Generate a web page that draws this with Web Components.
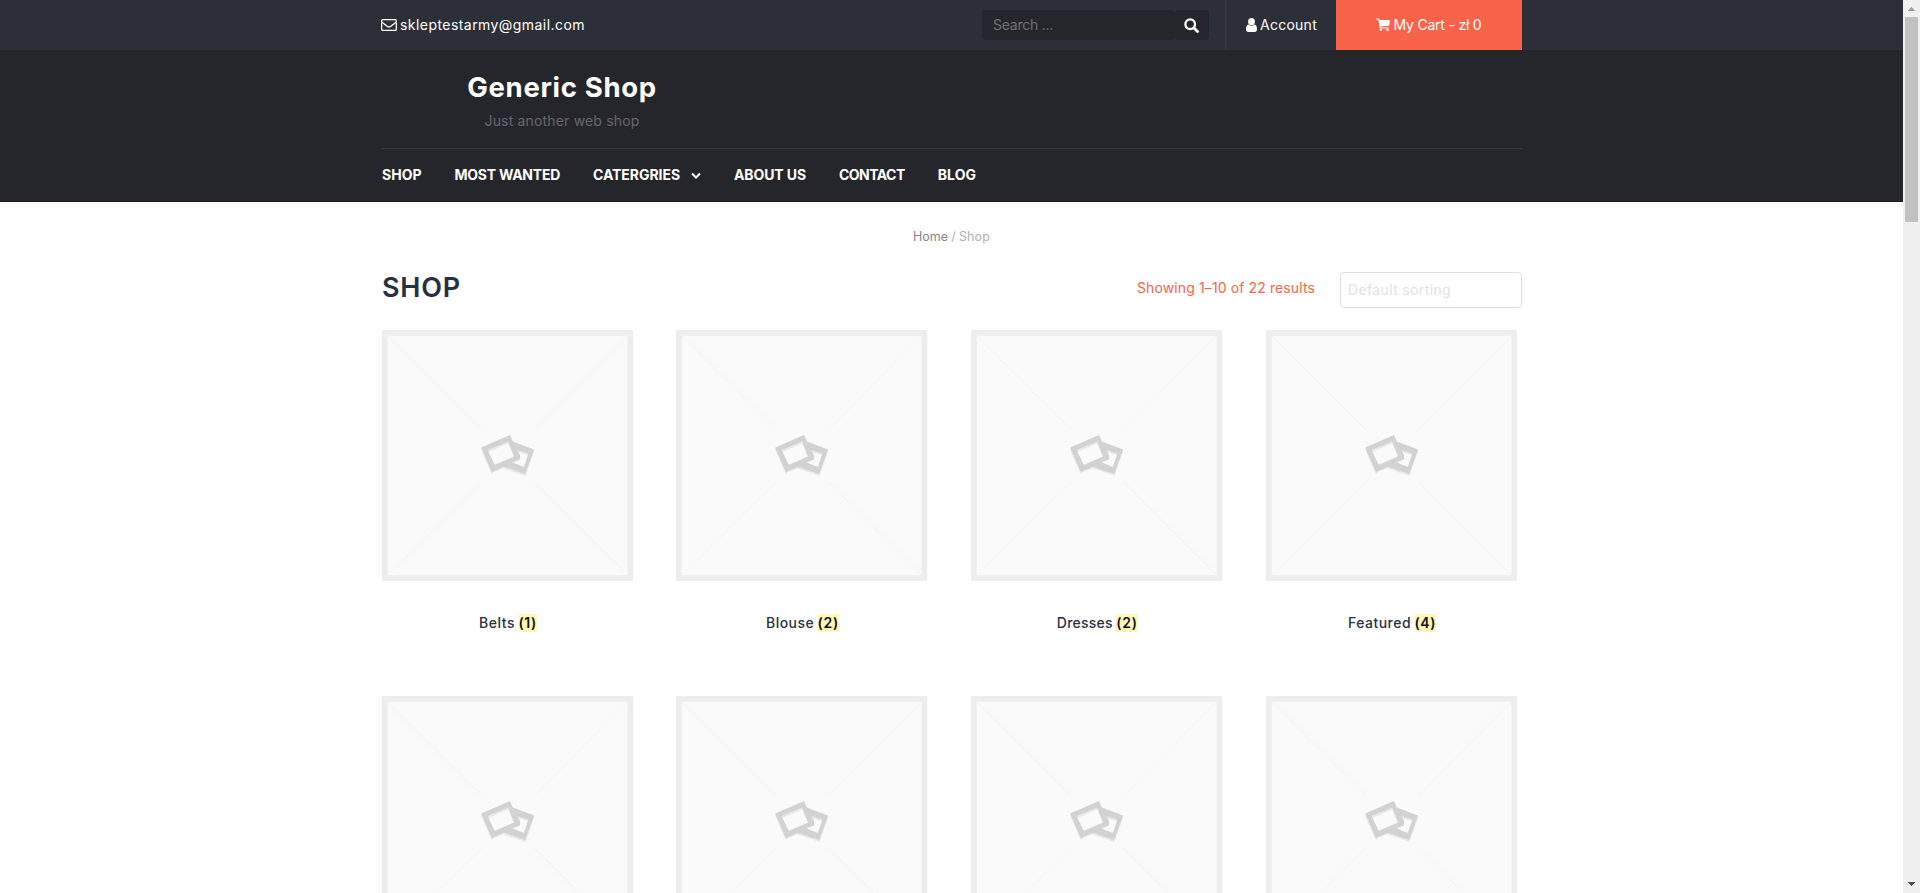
<!DOCTYPE html>
<html lang="en"><head><meta charset="utf-8"><title>Generic Shop</title>
<style>html,body{margin:0;height:100%;overflow:hidden;background:#fff}body{font:14px Inter,"Liberation Sans",sans-serif}</style></head>
<body><shop-page></shop-page>
<script>
const define = (name, html, after) => customElements.define(name, class extends HTMLElement {
  connectedCallback() {
    if (this.shadowRoot) return;
    const t = document.createElement('template');
    t.innerHTML = html;
    this.attachShadow({mode: 'open'}).append(t.content.cloneNode(true));
    if (after) after(this);
  }
});

/* A one-line label whose tracking fills the width given in "w". */
define('fit-text', `<style>:host{display:inline-block;white-space:nowrap}</style><span><slot></slot></span>`, el => {
  const w = +el.getAttribute('w'), s = el.shadowRoot.querySelector('span');
  const natural = s.getBoundingClientRect().width;
  el.style.letterSpacing = (w - natural) / Math.max(1, el.textContent.length) + 'px';
  el.style.width = w + 'px';
});

define('top-bar', `<style>
:host{display:block;height:50px;background:#2c2f37;color:#fff;line-height:50px;font-size:14px}
.in{width:1140px;margin-left:382px;display:flex;height:50px}
svg{display:block;flex:none}
.mail{display:flex;align-items:center;gap:3px;margin-left:-1px;margin-right:auto}
.search{display:flex;height:30px;margin:10px 16px 0 0;line-height:30px;color:#6f7073}
.q{width:182px;padding-left:11px;background:#25262b;border-radius:4px}
.go{width:33px;padding-right:1px;background:#25262b;border-radius:4px;display:flex;align-items:center;justify-content:center}
.acc{width:90px;padding-left:20px;border-left:1px solid #383b43;display:flex;align-items:center;gap:3px}
.acc svg,.cart svg{margin-top:-1px}
.cart{width:146px;padding-left:40px;background:#f9634a;display:flex;align-items:center;gap:3.500px}
</style><div class="in">
<div class="mail"><svg width="16" height="12" viewBox="0 0 16 12" fill="none" stroke="#fff" stroke-width="1.3"><rect x=".65" y=".65" width="14.7" height="10.7" rx="1.2"/><path d="M1 3.2L6.5 7.4Q8 8.5 9.500 7.4L15 3.200"/></svg><fit-text w="185">skleptestarmy@gmail.com</fit-text></div>
<div class="search"><div class="q"><fit-text w="60">Search ...</fit-text></div><div class="go"><svg width="15" height="15" viewBox="0 0 15 15" fill="none" stroke="#fff" stroke-width="2.3"><circle cx="6.200" cy="6.200" r="4.800"/><path d="M9.700 9.700L13.500 13.500" stroke-width="2.800" stroke-linecap="round"/></svg></div></div>
<div class="acc"><svg width="11" height="14" viewBox="0 0 11 13.300" preserveAspectRatio="none" fill="#fff"><circle cx="5.500" cy="3.500" r="3.400"/><path d="M2.600 6.200C.7 6.500 0 8.400 0 10.700C0 12.400.9 13.300 2.300 13.300H8.700C10.100 13.300 11 12.400 11 10.700C11 8.400 10.300 6.500 8.400 6.200C7 7.900 4 7.900 2.600 6.200Z"/></svg><fit-text w="57">Account</fit-text></div>
<div class="cart"><svg width="14" height="13" viewBox="0 0 14 13" fill="#fff"><path d="M0 .5H2.500Q3.200.5 3.400 1.900H13.200Q14 1.900 13.900 2.700L13.300 7Q13.200 7.600 12.500 7.700L4.700 8.600L4.900 9.400H12.500V10.500H4.200Q3.500 10.500 3.600 9.800L3.800 8.900L2.200 1.600H0Z"/><circle cx="4.900" cy="11.700" r="1.200"/><circle cx="11.600" cy="11.700" r="1.200"/></svg><fit-text w="88">My Cart - zł 0</fit-text></div>
</div>`);

define('site-header', `<style>
:host{display:block;height:152px;box-sizing:border-box;background:#25262b;border-bottom:1px solid #1d1a22;color:#fff}
.in{width:1140px;margin-left:382px}
.brand{height:98px;width:360px;text-align:center;display:flex;flex-direction:column;align-items:center}
.t{font-size:27.500px;font-weight:700;line-height:36px;margin-top:19px}
.s{font-size:14px;line-height:20px;color:#66676a;margin-top:6px}
nav{border-top:1px solid #373940;display:flex;font-weight:700;font-size:14px;line-height:52px}
nav fit-text{margin-right:33px}
svg{margin:22.500px 33px 0 -22px}
</style><div class="in"><div class="brand"><fit-text class="t" w="189.500">Generic Shop</fit-text><fit-text class="s" w="155">Just another web shop</fit-text></div>
<nav><fit-text w="39.500">SHOP</fit-text><fit-text w="105.500">MOST WANTED</fit-text><fit-text w="87">CATERGRIES</fit-text><svg width="10" height="8" viewBox="0 0 10 8" fill="none" stroke="#fff" stroke-width="2"><path d="M1 1.500L5 5.500L9 1.500"/></svg><fit-text w="72">ABOUT US</fit-text><fit-text w="65.700">CONTACT</fit-text><fit-text w="38.500">BLOG</fit-text></nav></div>`);

define('shop-toolbar', `<style>
:host{display:block;color:#b0b0b0}
.bc{width:77px;margin:27px 0 0 913px;line-height:16px;font-size:12.500px;display:flex;justify-content:space-between}
.bc b{font-weight:400;color:#858585}
.row{width:1140px;margin:27px 0 0 382px;display:flex;height:58px}
.h{margin:0 auto 0 0;color:#27303e;font-size:27px;font-weight:600;line-height:32px}
.r{color:#f9634a;font-size:14px;line-height:32px}
.sel{width:173px;height:34px;padding-left:7px;margin-left:25px;border:1px solid #dedede;border-radius:4px;color:#e2e2e2;font-size:14px;line-height:34px}
</style><div class="bc"><b><fit-text w="35">Home</fit-text></b><span>/</span><fit-text w="31">Shop</fit-text></div>
<div class="row"><fit-text class="h" w="79">SHOP</fit-text><fit-text class="r" w="178">Showing 1–10 of 22 results</fit-text><div class="sel"><fit-text w="103">Default sorting</fit-text></div></div>`);

define('product-card', `<style>
:host{display:block;height:366px}
svg{display:block}
.l{display:flex;justify-content:center;gap:3.500px;margin:33px 0 0 1px;line-height:17px;font-weight:500;font-size:14px;color:#27303e}
mark{background:#fff8b8;color:#111;padding-bottom:1px;font-weight:600}
</style><svg width="251.300" height="251" viewBox="0 0 251 251" preserveAspectRatio="none">
<path fill="#ededed" d="M0 0H251V251H0Z"/><path fill="#fafafa" d="M5.700 5.700H245.300V245.300H5.700Z"/>
<path d="M6 6L100 100M152 152L245 245" stroke="#eeeeee" stroke-width=".6"/><path d="M245 6L152 100M100 152L6 245" stroke="#f1f1f1" stroke-width=".6"/>
<g fill-rule="evenodd" stroke-linejoin="round" stroke-width="1.500"><path fill="#e9e9e9" stroke="#e9e9e9" d="M131 114L151 121.500L143 145L121 137.500L111 141.500L110 143L100 120L127 108L132 116Z"/>
<path fill="#d2d2d2" stroke="#d2d2d2" d="M131 112.500L151 120L142.500 143L120.500 135.500L138 127Z"/><path fill="#d2d2d2" stroke="#d2d2d2" d="M100 118L127.500 106L137.500 129L110 141Z"/>
<path fill="#e9e9e9" d="M135 120L146.300 123.500L141.800 137L129.500 132L138 129.500L138 125Z"/><path fill="#fafafa" d="M136.500 122.500L145.500 125L141.500 136.800L131.500 132.800L138 129.500L138 125Z"/>
<path fill="#e9e9e9" d="M105.500 120L126 111.500L132 126.500L113 135Z"/><path fill="#fafafa" d="M106.500 122L126 113.500L131.500 126.500L112.500 134.500Z"/></g></svg>
<div class="l"><slot></slot><mark><slot name="count"></slot></mark></div>`);

define('scroll-bar', `<style>
:host{display:flex;flex-direction:column;justify-content:space-between;background:#f0f0f0;height:893px}
div{height:205px;margin:1px 2px auto;background:#c1c1c1}
svg{display:block;margin:7px 5px 5px}
svg:last-child{margin:0 5px 7px}
</style><svg width="7" height="4" shape-rendering="crispEdges"><path fill="#a3a3a3" d="M3 0h1v1h1v1h1v1h1v1H0V3h1V2h1V1h1z"/></svg><div></div><svg width="7" height="4" shape-rendering="crispEdges"><path fill="#505050" d="M0 0h7v1H6v1H5v1H4v1H3V3H2V2H1V1H0z"/></svg>`);

define('shop-page', `<style>
:host{display:grid;grid-template-columns:1903px 17px;height:893px;overflow:hidden}
main{height:893px;overflow:hidden}
.g{display:grid;grid-template-columns:repeat(4,251.300px);column-gap:43.450px;margin-left:381.700px}
</style><main><top-bar></top-bar><site-header></site-header><shop-toolbar></shop-toolbar><div class="g">
<product-card><fit-text w="36">Belts</fit-text><fit-text slot="count" w="18">(1)</fit-text></product-card>
<product-card><fit-text w="48">Blouse</fit-text><fit-text slot="count" w="21.500">(2)</fit-text></product-card>
<product-card><fit-text w="56">Dresses</fit-text><fit-text slot="count" w="21.500">(2)</fit-text></product-card>
<product-card><fit-text w="63">Featured</fit-text><fit-text slot="count" w="21.500">(4)</fit-text></product-card>
<product-card></product-card><product-card></product-card><product-card></product-card><product-card></product-card>
</div></main><scroll-bar></scroll-bar>`);
</script></body></html>
